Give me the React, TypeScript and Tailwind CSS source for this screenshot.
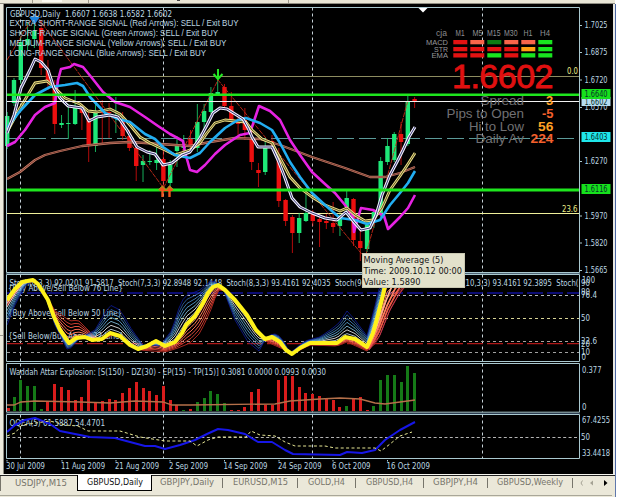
import React from 'react';

type Pt = [number, number];

const UI_FONT = "font-['DejaVu_Sans_Condensed','DejaVu_Sans',sans-serif]";
const ARIAL = "font-['Liberation_Sans',sans-serif]";
const TEXT = '#bcd6e0';
const FRAME = '#a9c8cf';

const pts = (a: Pt[]) => a.map((p) => p.join(',')).join(' ');
const barX = (i: number) => 14 + 6.79 * i;

/** Linear interpolation of a polyline at x. */
const at = (a: Pt[], x: number) => {
  for (let k = 1; k < a.length; k++) {
    if (x <= a[k][0]) {
      const [x0, y0] = a[k - 1];
      const [x1, y1] = a[k];
      return y0 + ((y1 - y0) * (x - x0)) / (x1 - x0);
    }
  }
  return a[a.length - 1][1];
};

// [index, up?, high, low, bodyTop, bodyBottom]
const candles: [number, 0 | 1, number, number, number, number][] = [
  [-1, 1, 112, 149, 116, 146], [0, 1, 78, 106, 80, 103], [1, 1, 36, 84, 42, 80], [2, 1, 22, 50, 39, 45],
  [3, 1, 22, 48, 31, 39], [4, 0, 20, 75, 28, 68], [5, 0, 60, 90, 70, 82], [6, 0, 80, 134, 87, 124],
  [7, 1, 115, 128, 123, 125], [8, 1, 104, 139, 123, 124], [9, 1, 90, 125, 107, 124], [10, 0, 104, 130, 108, 113],
  [11, 0, 112, 162, 118, 146], [12, 1, 104, 152, 112, 146], [13, 0, 100, 145, 112, 113], [14, 0, 103, 138, 112, 113],
  [15, 1, 97, 133, 111, 112], [16, 0, 112, 140, 121, 136], [17, 0, 130, 151, 136, 148], [18, 0, 146, 181, 148, 166],
  [19, 1, 155, 182, 161, 165], [20, 1, 150, 165, 161, 162], [21, 1, 143, 170, 160, 163], [22, 0, 150, 186, 159, 181],
  [23, 1, 160, 188, 165, 183], [24, 1, 136, 167, 145, 151], [25, 1, 135, 155, 145, 148], [26, 0, 130, 150, 139, 146],
  [27, 1, 104, 152, 122, 148], [28, 1, 104, 130, 111, 122], [29, 1, 87, 114, 93, 112], [30, 1, 79, 95, 92, 94],
  [31, 0, 84, 108, 87, 106], [32, 0, 92, 124, 106, 120], [33, 0, 115, 137, 122, 124], [34, 0, 108, 140, 120, 130],
  [35, 0, 128, 170, 139, 162], [36, 0, 163, 187, 170, 173], [37, 1, 138, 175, 147, 172], [38, 0, 135, 148, 141, 143],
  [39, 0, 148, 207, 155, 201], [40, 0, 199, 226, 200, 221], [41, 0, 215, 253, 217, 233], [42, 1, 213, 243, 218, 233],
  [43, 1, 188, 222, 213, 221], [44, 0, 210, 226, 213, 221], [45, 0, 216, 247, 219, 222], [46, 0, 214, 229, 221, 223],
  [47, 0, 202, 233, 223, 227], [48, 1, 214, 236, 219, 226], [49, 1, 191, 212, 198, 207], [50, 0, 198, 246, 199, 240],
  [51, 0, 230, 261, 241, 248], [52, 1, 222, 252, 225, 249], [53, 1, 210, 228, 212, 222], [54, 1, 157, 217, 161, 213],
  [55, 1, 138, 165, 146, 162], [56, 1, 132, 162, 134, 160], [57, 0, 122, 165, 134, 142], [58, 1, 96, 146, 101, 144],
  [59, 0, 97, 108, 99, 102],
];

const white: Pt[] = [[7,133],[14,115],[21,88],[30,70],[35,59],[41,62],[48,70],[54,88],[60,98],[68,106],[82,108],[89,121],[97,117],[110,115],[118,117],[127,130],[137,147],[147,152],[155,154],[163,165],[172,163],[182,155],[190,152],[200,138],[207,125],[213,113],[220,108],[227,109],[235,114],[243,119],[248,128],[252,137],[258,147],[272,147],[278,160],[285,178],[292,198],[300,207],[312,213],[325,218],[337,220],[346,212],[354,222],[361,230],[370,228],[376,215],[382,195],[390,175],[398,160],[403,150],[409,137],[415,127]];
const yellow: Pt[] = [[7,132],[20,108],[35,83],[47,81],[55,88],[65,98],[80,104],[88,111],[97,112],[110,109],[120,114],[130,125],[140,137],[150,143],[165,150],[175,155],[190,150],[200,143],[207,133],[215,123],[225,120],[235,121],[246,122],[252,130],[262,139],[272,143],[280,158],[290,177],[300,188],[312,197],[325,205],[340,211],[347,208],[355,215],[365,221],[373,220],[382,208],[390,190],[400,176],[408,164],[415,153]];
const blue: Pt[] = [[7,128],[20,111],[35,95],[50,87],[65,85],[77,83],[83,86],[90,97],[105,113],[118,119],[130,122],[145,134],[155,139],[163,147],[175,155],[190,158],[200,153],[210,142],[225,128],[238,120],[246,118],[260,123],[272,130],[280,143],[290,162],[300,177],[312,193],[325,205],[340,218],[355,220],[367,224],[380,220],[390,205],[400,193],[408,183],[415,171]];
const magenta: Pt[] = [[7,146],[15,142],[25,130],[35,115],[45,107],[55,103],[58,80],[61,69],[70,67],[74,64],[83,67],[92,78],[103,92],[115,102],[130,107],[145,117],[158,126],[170,134],[183,141],[185,152],[190,170],[197,172],[205,165],[215,154],[225,145],[240,135],[250,133],[255,118],[259,106],[270,111],[280,120],[290,140],[300,155],[312,172],[325,184],[335,193],[345,205],[353,216],[354,232],[358,218],[361,208],[373,210],[384,216],[388,229],[400,217],[408,208],[415,195]];
const brown: Pt[] = [[7,179],[20,172],[35,160],[45,155],[60,151],[82,146],[110,143],[130,142],[160,144],[190,146],[210,142],[235,138],[260,139],[280,145],[312,157],[345,168],[370,177],[385,177],[400,173],[415,167]];

const stochMain: Pt[] = [[7,300],[15,289],[22,282],[33,280],[38,284],[48,300],[54,317],[60,330],[69,343],[76,338],[85,337],[92,340],[102,339],[110,333],[120,336],[130,345],[138,349],[147,346],[156,341],[165,346],[175,342],[182,333],[186,325],[195,316],[203,303],[208,293],[213,287],[218,285],[225,290],[235,300],[247,315],[256,330],[265,339],[272,337],[280,342],[286,350],[292,354],[300,348],[310,343],[325,343],[337,343],[345,337],[355,339],[367,347],[373,333],[378,315],[383,295],[386,280],[420,272]];
const stochRed: Pt[] = [[7,306],[22,285],[35,281],[48,298],[54,310],[60,314],[70,321],[78,320],[87,329],[95,337],[102,340],[115,334],[130,345],[140,350],[165,352],[178,348],[190,343],[200,333],[210,312],[218,290],[228,291],[247,317],[265,341],[285,350],[292,354],[310,345],[337,346],[347,342],[367,351],[377,342],[385,322],[392,305],[400,293],[410,281],[420,272]];
const stochBlue: Pt[] = [[7,325],[15,305],[25,285],[35,280],[45,295],[55,325],[68,351],[80,338],[95,330],[102,318],[110,305],[120,310],[132,330],[143,345],[160,346],[172,330],[180,305],[185,296],[200,290],[212,280],[222,286],[235,320],[248,342],[259,351],[265,340],[273,333],[281,337],[290,353],[305,341],[320,337],[333,328],[340,322],[347,311],[355,320],[367,336],[374,310],[380,285],[420,272]];
const sampleXs = Array.from({ length: 104 }, (_, k) => 7 + k * 4);
const fan = (outer: Pt[], t: number): Pt[] =>
  sampleXs.map((x) => [x, at(stochMain, x) * (1 - t) + at(outer, x) * t]);
const blueFan = ['#d8ecf8', '#ffffff', '#8fd0f0', '#63b4e8', '#4a90d0', '#3468b0', '#0c1c9c'];
const redFan = ['#ff9a78', '#ff7a58', '#f86850', '#e85040', '#cc3c30', '#a82820'];

// top of every histogram bar, starting at index -1
const bars: [string, number][] = (
  'r408 g397 g380 g386 g386 g409 r402 r384 r387 r390 r400 r397 r380 r403 r401 r399 r400 r393 r388 r382 r388 r391 r395 r386 r400 r405 g410 r409 g402 g398 g391 g394 g403 r410 r410 r407 r392 r389 r405 r405 r380 r376 r376 r387 r393 r394 r396 r398 r400 r407 g406 r398 r397 r410 g406 g380 g375 g375 g382 g366 g373'
).split(' ').map((s) => [s[0], Number(s.slice(1))]);
const signalLine: Pt[] = [[7,405],[14,405],[21,402],[35,401],[80,402],[110,403],[135,401],[163,402],[172,405],[190,405],[275,404],[290,401],[320,399],[340,398],[360,399],[375,403],[385,404],[400,402],[415,400]];
const qqeBlue: Pt[] = [[7,432],[15,425],[25,420],[35,418],[50,424],[60,431],[75,434],[90,437],[115,438],[130,442],[145,446],[155,446],[165,449],[180,445],[195,440],[207,434],[218,429],[228,430],[245,434],[258,442],[272,442],[285,450],[293,454],[340,455],[347,452],[362,453],[375,450],[385,440],[400,430],[415,422]];
const qqeDash: Pt[] = [[7,436],[15,433],[22,425],[50,421],[65,425],[78,426],[88,431],[120,431],[130,434],[140,437],[165,441],[190,441],[197,446],[208,440],[218,437],[246,437],[251,431],[260,435],[275,436],[285,442],[295,446],[325,446],[335,448],[375,448],[381,451],[390,444],[400,436],[412,432]];

const T = ({ x, y, w, s = 8.8, fill = TEXT, children }: {
  x: number; y: number; w: number; s?: number; fill?: string; children: string;
}) => (
  <text x={x} y={y} textLength={w} lengthAdjust="spacingAndGlyphs" fontSize={s} fill={fill} xmlSpace="preserve">
    {children}
  </text>
);

const H = ({ y, c, dash, w = 1 }: { y: number; c: string; dash?: string; w?: number }) => (
  <line x1={7} x2={579} y1={y} y2={y} stroke={c} strokeWidth={w} strokeDasharray={dash} />
);

const Ma = ({ d, edge, core, w = 2.4 }: { d: Pt[]; edge: string; core: string; w?: number }) => (
  <g fill="none" strokeLinejoin="round">
    <polyline points={pts(d)} stroke={edge} strokeWidth={w} />
    <polyline points={pts(d)} stroke={core} strokeWidth={w * 0.32} />
  </g>
);

/** One indicator window: plot on the left, value scale on the right. */
const Panel = ({ top, height, frameTop, frameBottom, axis, children }: {
  top: number; height: number; frameTop: number; frameBottom: number;
  axis: React.ReactNode; children: React.ReactNode;
}) => (
  <div className="flex shrink-0">
    <svg className="block shrink-0" width={576} height={height} viewBox={`4 ${top} 576 ${height}`}>
      {[20.5, 163.5, 312.5, 482.5].map((x) => (
        <line key={x} x1={x} x2={x} y1={frameTop} y2={frameBottom} stroke="#c4d0d6" strokeDasharray="3 3" />
      ))}
      {children}
      <path d={`M6.5 ${frameTop}V${frameBottom}H579.5V${frameTop}Z`} fill="none" stroke={FRAME} />
    </svg>
    <svg className="block shrink-0 overflow-visible" width={33} height={height} viewBox={`580 ${top} 33 ${height}`}>
      {axis}
    </svg>
  </div>
);

const prices: [string, number][] = [['1.7025', 25], ['1.6875', 52], ['1.6720', 79.5], ['1.6570', 107], ['1.6270', 161], ['1.5970', 215.5], ['1.5820', 242.5], ['1.5665', 270]];
const tags: [string, number, number, string][] = [['1.6602', 97, 9, '#b5dcf0'], ['1.6640', 89, 10, '#16e01c'], ['1.6403', 132, 10, '#1fe6ea'], ['1.6116', 184, 10, '#16e01c']];
const signals: [string, string][] = [
  ['MACD', 'r s d s s g'], ['STR', 'r r r r o g'], ['EMA', 'r r g r g g'],
];
const cellColor: Record<string, string> = { r: '#e31212', s: '#f8654a', d: '#0c7d14', o: '#ffa013', g: '#18e51f' };

const MainPlot = () => (
  <>
    <H y={76.5} c="#8d8c60" />
    <H y={138.5} c="#5b9a99" dash="17 5" />
    <H y={213.5} c="#efef9a" />
    {candles.map(([i, up, hi, lo, a, b]) => {
      const c = up ? '#1ee878' : '#ec0f0f';
      return (
        <g key={i} fill={c}>
          <rect x={barX(i) - 0.5} y={hi} width={1} height={lo - hi} opacity={0.75} />
          <rect x={barX(i) - 2.2} y={a} width={4.4} height={b - a} />
        </g>
      );
    })}
    <path d="M7 60L35 14L163.5 188L218 80L365 258L381 200L408 100" fill="none" stroke="#c62a18" strokeWidth={0.9} strokeDasharray="5 1" />
    <Ma d={brown} edge="#cc7c68" core="#5a2a20" w={2.3} />
    <polyline points={pts(magenta)} fill="none" stroke="#e622e2" strokeWidth={2.6} strokeLinejoin="round" />
    <Ma d={yellow} edge="#eee084" core="#4b4520" w={2.8} />
    <polyline points={pts(blue)} fill="none" stroke="#22aef2" strokeWidth={2.6} strokeLinejoin="round" />
    <Ma d={white} edge="#f2f0ff" core="#30306a" w={3} />
    <H y={94.7} c="#1ee61e" w={2.6} />
    <H y={101.5} c="#f2f2f2" />
    <H y={190} c="#1ee61e" w={2.8} />
    <path d="M218 69V77M213.5 74L218 79L222.5 74" fill="none" stroke="#24e824" strokeWidth={2} />
    <path d="M34.5 14V20M31 18L34.5 23L38 18Z" fill="#1e82dc" stroke="#1e82dc" strokeWidth={2} />
    <path d="M162.5 197V188M159.5 190.5L162.5 187L165.5 190.5M169.5 197V188M166.5 190.5L169.5 187L172.5 190.5" fill="none" stroke="#f0541c" strokeWidth={2.4} />
    <path d="M158 190L162.5 186L166 190L169.5 186L174 190" fill="none" stroke="#8da81c" strokeWidth={1} />
    <path d="M418.5 8H427.5L423 12.5Z" fill="#fff" />
    <g className={UI_FONT}>
      <T x={10} y={17.3} w={162}>GBPUSD,Daily  1.6607 1.6638 1.6582 1.6602</T>
      <T x={567} y={73.8} w={11} s={8} fill="#eeee88">0.0</T>
      <T x={562} y={211.5} w={15.5} s={8} fill="#eeee88">23.6</T>
    </g>
    <g className={ARIAL}>
      <T x={9.5} y={25.8} w={229} s={9}>EXTRA SHORT-RANGE SIGNAL (Red Arrows): SELL / Exit BUY</T>
      <T x={9.5} y={36} w={208.5} s={9}>SHORT-RANGE SIGNAL (Green Arrows): SELL / Exit BUY</T>
      <T x={9.5} y={46.3} w={217} s={9}>MEDIUM-RANGE SIGNAL (Yellow Arrows): SELL / Exit BUY</T>
      <T x={9.5} y={56.4} w={196.5} s={9}>LONG-RANGE SIGNAL (Blue Arrows): SELL / Exit BUY</T>
      <T x={436} y={36.2} w={11} s={8.2} fill="#88888b">cja</T>
      {([['M1', 455.5, 9], ['M5', 472.5, 10], ['M15', 487, 13.5], ['M30', 504, 13.5], ['H1', 523.5, 9], ['H4', 540, 10]] as [string, number, number][]).map(([t, x, w]) => (
        <T key={t} x={x} y={36.2} w={w} s={8.2} fill="#909194">{t}</T>
      ))}
      {signals.map(([name, cells], r) => (
        <g key={name}>
          <T x={[426, 434, 431.5][r]} y={[44.6, 51.6, 58.2][r]} w={[22, 14, 16.5][r]} s={7.4} fill="#96979a">{name}</T>
          {cells.split(' ').map((k, c) => (
            <rect key={c} x={453.3 + c * 17} y={[40, 47, 53.2][r]} width={14} height={4.3} fill={cellColor[k]} />
          ))}
        </g>
      ))}
      <text x={452} y={88} textLength={101.5} fontSize={34} fill="#e01010" stroke="#e01010" strokeWidth={0.8}>1.6602</text>
      {([['Spread', 480.5, 43.5, 105.3, '3', 546, 7.2, '#ffa024'], ['Pips to Open', 446.5, 77.5, 118.3, '-5', 542, 11.5, '#f4602c'],
        ['Hi to Low', 469, 55, 130.6, '56', 538, 15.3, '#ffa024'], ['Daily Av', 475.5, 48.5, 143.2, '224', 530.5, 23, '#f4602c']] as [string, number, number, number, string, number, number, string][]).map(([l, x, w, y, v, vx, vw, c]) => (
        <g key={l}>
          <T x={x} y={y} w={w} s={13.2} fill="#707073">{l}</T>
          <g fontWeight={700}><T x={vx} y={y} w={vw} s={13.2} fill={c}>{v}</T></g>
        </g>
      ))}
    </g>
  </>
);

const MainAxis = () => (
  <g className={UI_FONT}>
    {prices.map(([p, y]) => (
      <g key={p}>
        <line x1={580} x2={582} y1={y + 0.5} y2={y + 0.5} stroke={FRAME} />
        <T x={584.5} y={y + 3} w={23}>{p}</T>
      </g>
    ))}
    {tags.map(([p, y, h, c]) => (
      <g key={p}>
        <rect x={581.5} y={y} width={29} height={h} fill={c} />
        <T x={584.5} y={y + h / 2 + 3} w={23} fill="#07302a">{p}</T>
      </g>
    ))}
  </g>
);

const StochPlot = () => (
  <>
    <H y={293} c="#10109c" dash="16 4" w={1.6} />
    <H y={295.5} c="#b4b8bc" dash="3 3" />
    <H y={318.5} c="#d6d294" dash="3 3" />
    <H y={341.5} c="#a8a29c" dash="3 3" />
    <H y={343.7} c="#b01818" dash="16 4" w={1.3} />
    <H y={352.5} c="#a0a0a0" dash="3 3" />
    <g className={UI_FONT}>
      <T x={9.5} y={285.5} w={569}>Stoch(6,3,3) 92.0201 91.5817  Stoch(7,3,3) 92.8948 92.1448  Stoch(8,3,3) 93.4161 92.4035  Stoch(9,3,3) 93.4161 92.3989  Stoch(10,3,3) 93.4161 92.3895  Stoch(</T>
      <T x={8} y={291.2} w={115}>{'{Buy Above/Sell Below 76 Line}'}</T>
      <T x={8} y={316} w={114}>{'{Buy Above/Sell Below 50 Line}'}</T>
      <T x={8} y={339} w={116}>{'{Sell Below/Buy Above 22 Line}'}</T>
    </g>
    <svg x={7} y={277} width={409} height={84} viewBox="7 277 409 84">
      {redFan.map((c, k) => (
        <polyline key={c} points={pts(fan(stochRed, (k + 1) / 6))} fill="none" stroke={c} strokeWidth={1} />
      ))}
      {blueFan.map((c, k) => (
        <polyline key={c} points={pts(fan(stochBlue, (k + 1) / 7))} fill="none" stroke={c} strokeWidth={0.8} />
      ))}
      <g fill="none" strokeWidth={1.7}>
        <path d="M369 347L377 326L385 303L392 286L397 276" stroke="#ffb090" />
        <path d="M369 348L378 328L387 306L395 289L402 276" stroke="#ff8060" />
        <path d="M369 349L379 332L388 309L397 292L407 276" stroke="#f05a48" />
        <path d="M369 350L380 335L389 312L399 294L412 276" stroke="#c03850" strokeWidth={1} />
      </g>
      <polyline points={pts(stochMain)} fill="none" stroke="#fff21a" strokeWidth={4} strokeLinejoin="round" />
    </svg>
  </>
);

const dates: [string, number, number][] = [['30 Jul 2009', 6, 39], ['11 Aug 2009', 61, 44], ['21 Aug 2009', 115, 44], ['2 Sep 2009', 169, 39], ['14 Sep 2009', 223.5, 44], ['24 Sep 2009', 278, 43.5], ['6 Oct 2009', 332, 38.5], ['16 Oct 2009', 386.5, 43.5]];

const tabs: [string, string, string][] = [
  ['GBPJPY,Daily', 'w-[71px]', 'w-[54px]'],
  ['EURUSD,M15', 'w-[75px]', 'w-[55px]'],
  ['GOLD,H4', 'w-[58px]', 'w-[37px]'],
  ['GBPUSD,H4', 'w-[68px]', 'w-[47px]'],
  ['GBPJPY,H4', 'w-[64px]', 'w-[45px]'],
  ['GBPUSD,Weekly', 'w-[85px]', 'w-[66px]'],
];

const TabLabel = ({ text, w, fill }: { text: string; w: string; fill: string }) => (
  <svg className={`block h-[14px] ${w} overflow-visible`}>
    <text x={0} y={9.2} textLength="100%" lengthAdjust="spacingAndGlyphs" fontSize={9.5} fill={fill}>{text}</text>
  </svg>
);

export default function App() {
  return (
    <div className={`relative flex h-[497px] w-[625px] flex-col overflow-hidden bg-white ${UI_FONT}`}>
      {/* toolbar edge */}
      <div className="flex h-[4px] w-[615px] shrink-0 items-start border-b border-[#8f8d82] bg-[#e9e6d6]">
        <div className="ml-[32px] h-[3px] w-px bg-[#9b988a]" />
        <div className="ml-[9px] h-[2px] w-[20px] bg-[#fbfaf2]" />
        <div className="ml-[26px] h-[3px] w-px bg-[#9b988a]" />
        <div className="ml-[88px] h-px w-[3px] bg-[#444]" />
        <div className="ml-[108px] h-[3px] w-px bg-[#9b988a]" />
      </div>
      <div className="flex h-[470px] shrink-0">
        <div className="w-[4px] shrink-0 border-r border-[#8b8a80] bg-[#eceadd]">
          <div className="mt-[331px] h-px bg-[#9c9a90]" />
        </div>
        <div className="flex w-[609px] shrink-0 flex-col overflow-hidden bg-black">
          <Panel top={4} height={269} frameTop={7.5} frameBottom={272.5} axis={<MainAxis />}>
            <MainPlot />
          </Panel>
          <div className="ml-[2px] h-px w-[574px] shrink-0 bg-[#4e6475]" />
          <Panel
            top={274} height={89} frameTop={274.5} frameBottom={361.5}
            axis={
              <g className={UI_FONT}>
                <T x={582} y={283} w={13}>100</T>
                <T x={581} y={286.2} w={9}>90</T>
                <T x={581} y={294.5} w={9}>80</T>
                <T x={581} y={297.5} w={16}>76.4</T>
                <T x={581} y={321} w={9}>50</T>
                <T x={581} y={344} w={16}>22.6</T>
                <T x={581} y={347} w={9}>20</T>
                <T x={581} y={355} w={9}>10</T>
                <T x={581.5} y={359.5} w={4.5}>0</T>
              </g>
            }
          >
            <StochPlot />
          </Panel>
          <Panel
            top={363} height={50} frameTop={363.5} frameBottom={412.2}
            axis={
              <g className={UI_FONT}>
                <T x={582} y={372.5} w={19.5}>0.377</T>
                <T x={582} y={410} w={4.5}>0</T>
              </g>
            }
          >
            <g className={UI_FONT}>
              <T x={9.5} y={375} w={316.5}>Waddah Attar Explosion: [S(150) - DZ(30) - EP(15) - TP(15)] 0.3081 0.0000 0.0993 0.0030</T>
            </g>
            {bars.map(([c, y], k) => (
              <rect key={k} x={Math.max(7, Math.round(barX(k - 1) - 1.5))} y={y} width={3} height={411 - y} fill={c === 'r' ? '#d91c1c' : '#157a17'} />
            ))}
            <polyline points={pts(signalLine)} fill="none" stroke="#b5704a" strokeWidth={1.3} />
          </Panel>
          <div className="ml-[2px] h-px w-[574px] shrink-0 bg-[#2b3c50]" />
          <Panel
            top={414} height={46} frameTop={414.5} frameBottom={458.5}
            axis={
              <g className={UI_FONT}>
                <T x={582} y={423} w={28}>67.4255</T>
                <T x={581} y={439.5} w={9}>50</T>
                <T x={582} y={455.5} w={28}>33.4418</T>
              </g>
            }
          >
            <H y={437.5} c="#b4b4b4" dash="3 2.4" />
            <g className={UI_FONT}>
              <T x={9.5} y={426} w={95.5}>QQEA(5) 61.5887 54.4701</T>
            </g>
            <polyline points={pts(qqeBlue)} fill="none" stroke="#1616e6" strokeWidth={2} strokeLinejoin="round" />
            <polyline points={pts(qqeDash)} fill="none" stroke="#e6e694" strokeWidth={1} strokeDasharray="3 2.4" />
          </Panel>
          <svg className="block shrink-0" width={609} height={14} viewBox="4 460 609 14">
            {dates.map(([d, x, w]) => (
              <g key={d}>
                <line x1={x + 1} x2={x + 1} y1={459} y2={461.5} stroke={FRAME} />
                <T x={x} y={469} w={w}>{d}</T>
              </g>
            ))}
          </svg>
        </div>
        <div className="w-[3px] shrink-0 border-r border-[#4a66a4] bg-[#e8e8e4]" />
      </div>
      {/* chart tabs */}
      <div className="flex h-[23px] w-[616px] shrink-0 flex-col border-r border-[#5f78ac] bg-[#ebe8d9]">
        <div className="h-px shrink-0 bg-[#f6f5ee]" />
        <div className="flex h-[16px] shrink-0 items-center border-t border-[#222]">
          <div className="flex h-[15px] w-[77px] shrink-0 items-center border-l border-[#77756b] pl-[14px]">
            <TabLabel text="USDJPY,M15" w="w-[52px]" fill="#77756b" />
          </div>
          <div className="-mt-px flex h-[16px] w-[75px] shrink-0 items-center justify-center border-x border-b border-black bg-white">
            <TabLabel text="GBPUSD,Daily" w="w-[56px]" fill="#111" />
          </div>
          {tabs.map(([t, w, tw]) => (
            <div key={t} className={`-mt-px flex h-[10px] shrink-0 items-center justify-center border-r border-[#77756b] ${w}`}>
              <TabLabel text={t} w={tw} fill="#77756b" />
            </div>
          ))}
          <svg className="-mt-px block h-[14px] w-[40px] shrink-0" viewBox="574 0 40 14">
            <path d="M583.5 4.5L582 7L583.5 9.5" fill="none" stroke="#a5a294" />
            <path d="M594 4.5V9.5L591 7Z" fill="#a5a294" />
            <path d="M605 4V10L608.5 7Z" fill="#000" />
          </svg>
        </div>
        <div className="mt-[4px] h-px w-[612px] shrink-0 bg-[#a9a799]" />
      </div>
      {/* data tooltip */}
      <div className="absolute left-[362px] top-[253px] h-[35px] w-[103px] border border-[#c9c8b2] bg-[#e2e1cb]">
        <svg className="block" width={101} height={33} viewBox="363 254 101 33">
          <T x={363.5} y={263} w={80} s={9.4} fill="#151515">Moving Average (5)</T>
          <T x={363.5} y={274.4} w={98.5} s={9.4} fill="#151515">Time: 2009.10.12 00:00</T>
          <T x={363.5} y={285.3} w={57} s={9.4} fill="#151515">Value: 1.5890</T>
        </svg>
      </div>
    </div>
  );
}
